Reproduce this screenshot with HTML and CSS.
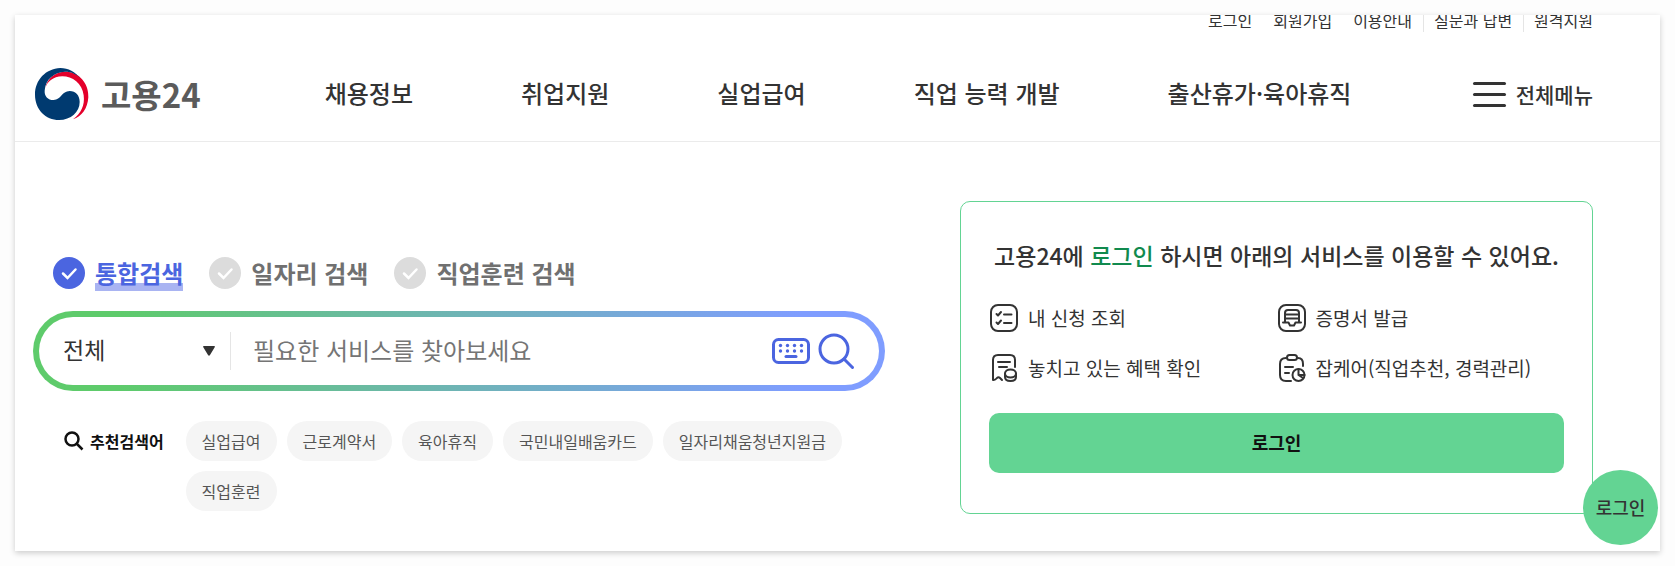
FILE: index.html
```html
<!DOCTYPE html>
<html lang="ko">
  <head>
    <meta charset="UTF-8" />
    <meta name="viewport" content="width=device-width, initial-scale=1.0" />
    <title>고용24</title>
    <link rel="stylesheet" href="styles.css">
  </head>
  <body>
    <div class="page">
      <header class="header">
        <ul class="util">
          <li><a href="#">로그인</a></li>
          <li><a href="#">회원가입</a></li>
          <li><a href="#">이용안내</a></li>
          <li class="line"><a href="#">질문과 답변</a></li>
          <li class="line"><a href="#">원격지원</a></li>
        </ul>
        <div class="gnb">
          <a href="#" class="logo">
            <svg width="54" height="52" viewBox="0 0 162 156">
              <path fill="#e4002b" d="M30 62C38 24 70 7 102 12C140 18 162 54 160 88C158 122 140 146 114 154C138 136 150 112 146 82C142 46 112 25 82 25C54 25 36 42 30 62Z" />
              <path fill="#003a70" d="M138 32C120 12 100 0 76 0C32 2 0 36 0 80C0 124 32 156 72 156C108 156 134 132 134 102C134 82 122 69 104 69C80 69 78 96 56 96C38 96 28 84 29 68C31 34 58 12 90 11C110 11 126 19 138 32Z" />
            </svg>
            <span>고용24</span>
          </a>
          <nav class="menu">
            <a href="#">채용정보</a>
            <a href="#">취업지원</a>
            <a href="#">실업급여</a>
            <a href="#">직업 능력 개발</a>
            <a href="#">출산휴가·육아휴직</a>
          </nav>
          <button type="button" class="all-menu">
            <span class="bars"><i></i><i></i><i></i></span>
            전체메뉴
          </button>
        </div>
      </header>

      <main class="main">
        <section class="search">
          <div class="tabs">
            <label class="tab">
              <input type="radio" name="type" checked />
              <svg class="check" viewBox="0 0 32 32"><circle cx="16" cy="16" r="16" /><path d="M10 16.500l4.500 4.500 8-8.500" /></svg>
              <span>통합검색</span>
            </label>
            <label class="tab">
              <input type="radio" name="type" />
              <svg class="check" viewBox="0 0 32 32"><circle cx="16" cy="16" r="16" /><path d="M10 16.500l4.500 4.500 8-8.500" /></svg>
              <span>일자리 검색</span>
            </label>
            <label class="tab">
              <input type="radio" name="type" />
              <svg class="check" viewBox="0 0 32 32"><circle cx="16" cy="16" r="16" /><path d="M10 16.500l4.500 4.500 8-8.500" /></svg>
              <span>직업훈련 검색</span>
            </label>
          </div>

          <form class="search-box">
            <div class="select-wrap">
              <select aria-label="검색 범위">
                <option>전체</option>
              </select>
              <svg width="12" height="10" viewBox="0 0 12 10"><path fill="#333" d="M1 0h10q1.500 0 .7 1.300L7 9q-1 1.300-2 0L.3 1.300Q-.5 0 1 0z" /></svg>
            </div>
            <input type="text" placeholder="필요한 서비스를 찾아보세요" aria-label="검색어" />
            <button type="button" class="icon-btn" aria-label="키보드">
              <svg width="38" height="26" viewBox="0 0 38 26" fill="#4b65e0">
                <rect x="1.500" y="1.500" width="35" height="23" rx="5" fill="none" stroke="#4b65e0" stroke-width="3" />
                <circle cx="8.500" cy="7.500" r="1.700" /><circle cx="15.500" cy="7.500" r="1.700" /><circle cx="22.500" cy="7.500" r="1.700" /><circle cx="29.500" cy="7.500" r="1.700" />
                <circle cx="8.500" cy="13" r="1.700" /><circle cx="15.500" cy="13" r="1.700" /><circle cx="22.500" cy="13" r="1.700" /><circle cx="29.500" cy="13" r="1.700" />
                <rect x="12.500" y="17" width="13" height="3" rx="1.500" />
              </svg>
            </button>
            <button type="submit" class="icon-btn" aria-label="검색">
              <svg width="37" height="37" viewBox="0 0 37 37" fill="none" stroke="#4b65e0" stroke-width="3" stroke-linecap="round">
                <circle cx="16" cy="16" r="14" /><path d="M26 26l8.500 8.500" />
              </svg>
            </button>
          </form>

          <div class="keywords">
            <strong>
              <svg width="20" height="20" viewBox="0 0 20 20" fill="none" stroke="#111" stroke-width="2.500"><circle cx="8" cy="8" r="6.500" /><path d="M12.500 12.500l6 6" /></svg>
              추천검색어
            </strong>
            <ul>
              <li><a href="#">실업급여</a></li>
              <li><a href="#">근로계약서</a></li>
              <li><a href="#">육아휴직</a></li>
              <li><a href="#">국민내일배움카드</a></li>
              <li><a href="#">일자리채움청년지원금</a></li>
              <li><a href="#">직업훈련</a></li>
            </ul>
          </div>
        </section>

        <section class="login-box">
          <h2>고용24에 <em>로그인</em> 하시면 아래의 서비스를 이용할 수 있어요.</h2>
          <ul class="services">
            <li>
              <a href="#">
                <svg viewBox="0 0 28 28"><rect x="1" y="1" width="26" height="26" rx="7" /><path d="M6.500 10l1.500 1.500 3-3.500M6.500 18.500l1.500 1.500 3-3.500M14 10.500h7.500M14 19h7.500" /></svg>
                내 신청 조회
              </a>
            </li>
            <li>
              <a href="#">
                <svg viewBox="0 0 28 28"><rect x="1" y="1" width="26" height="26" rx="7" /><path d="M7 18.500V9q0-3 3-3h8q3 0 3 3v9.500M7.500 10.500h13M7.500 14.500h13M5 18.500h5.500l1.500 3h4l1.500-3H23" /></svg>
                증명서 발급
              </a>
            </li>
            <li>
              <a href="#">
                <svg viewBox="0 0 28 28"><path d="M3 26V6q0-5 5-5h12q5 0 5 5v7M3 26q2 .5 4-2 1.500-1.500 3 0l2 2M8 8h12M9 13h8" /><ellipse cx="20.500" cy="19.500" rx="5.500" ry="4" /><path d="M15 19.500V23q0 4 5.500 4t5.500-4v-3.500" /></svg>
                놓치고 있는 혜택 확인
              </a>
            </li>
            <li>
              <a href="#">
                <svg viewBox="0 0 28 28"><rect x="9" y="1" width="10" height="5" rx="2.500" /><path d="M8 4Q2 4 2 10v11q0 6 6 6h5M20 4q5 0 5 6v2M7 13h8M7 19h4" /><circle cx="20.500" cy="21" r="6" /><path d="M20.500 15v6l4.500 3M20.500 21h6" /></svg>
                잡케어(직업추천, 경력관리)
              </a>
            </li>
          </ul>
          <button type="button" class="login-btn">로그인</button>
        </section>
      </main>

      <a href="#" class="quick-login">로그인</a>
    </div>
  </body>
</html>
```

FILE: styles.css
```css
* {
  box-sizing: border-box;
  margin: 0;
  padding: 0;
}

body {
  padding: 15px;
  background-color: #fdfdfd;
  font-family: "Noto Sans CJK KR", sans-serif;
  color: #333;
}

ul {
  list-style: none;
}

a {
  color: inherit;
  text-decoration: none;
}

button,
input,
select {
  font-family: inherit;
  color: inherit;
  border: 0;
  background: none;
}

.page {
  position: relative;
  background-color: #fff;
  box-shadow: 0 2px 6px rgba(0, 0, 0, 0.2);
}

.header {
  height: 127px;
  padding: 0 67px 0 20px;
  border-bottom: 1px solid #ebebeb;
  overflow: hidden;
}

/* top links are partly scrolled out of view */
.util {
  display: flex;
  justify-content: flex-end;
  gap: 21px;
  margin-top: -7px;
  font-size: 16px;
  line-height: 24px;
}

.util .line {
  padding-left: 10px;
  margin-left: -10px;
  border-left: 1px solid #e5e5e5;
}

.gnb {
  display: flex;
  align-items: center;
  height: 124px;
}

.logo {
  display: flex;
  align-items: center;
  gap: 12px;
  font-size: 33px;
  font-weight: 700;
  color: #5b5b5b;
}

.menu {
  display: flex;
  gap: 108px;
  margin-left: 124px;
  padding-bottom: 4px;
  font-size: 24px;
  font-weight: 500;
}

.all-menu {
  display: flex;
  align-items: center;
  gap: 10px;
  margin-left: auto;
  font-size: 21px;
  font-weight: 500;
}

.bars {
  display: flex;
  flex-direction: column;
  gap: 8px;
}

.bars i {
  width: 33px;
  height: 3px;
  border-radius: 2px;
  background-color: #333;
}

.main {
  display: flex;
  align-items: flex-start;
  padding: 59px 67px 37px 18px;
}

.search {
  width: 852px;
  padding-top: 54px;
}

.tabs {
  display: flex;
  gap: 26px;
  padding-left: 20px;
}

.tab {
  display: flex;
  align-items: center;
  gap: 10px;
  font-size: 24px;
  font-weight: 700;
  line-height: 36px;
  color: #707070;
}

.tab input {
  position: absolute;
  appearance: none;
}

.check {
  width: 32px;
  height: 32px;
  fill: #dcdcdc;
}

.check path {
  fill: none;
  stroke: #fff;
  stroke-width: 2.5;
  stroke-linecap: round;
}

.tab input:checked ~ .check {
  fill: #4b65e0;
}

.tab input:checked ~ span {
  color: #4b65e0;
  background: linear-gradient(#a9b4f2, #a9b4f2) bottom / 100% 8px no-repeat;
}

.search-box {
  display: flex;
  align-items: center;
  height: 80px;
  margin-top: 20px;
  padding: 0 24px;
  border: 6px solid transparent;
  border-radius: 40px;
  background:
    linear-gradient(#fff, #fff) padding-box,
    linear-gradient(90deg, #5ecb6b 10%, #7f9dff 90%) border-box;
}

.select-wrap {
  display: flex;
  align-items: center;
  width: 168px;
  height: 38px;
  padding-right: 15px;
  border-right: 1px solid #e5e5e5;
}

.select-wrap select {
  flex: 1;
  appearance: none;
  padding-bottom: 4px;
  font-size: 23px;
}

.search-box input {
  flex: 1;
  min-width: 0;
  padding: 0 0 4px 22px;
  font-size: 24px;
}

.search-box input::placeholder {
  color: #757575;
}

.icon-btn {
  display: flex;
  margin-left: 8px;
}

.keywords {
  display: flex;
  gap: 22px;
  margin-top: 30px;
  padding: 0 20px 0 31px;
}

.keywords strong {
  display: flex;
  flex-shrink: 0;
  align-items: center;
  gap: 6px;
  height: 40px;
  font-size: 16px;
  color: #111;
}

.keywords ul {
  display: flex;
  flex-wrap: wrap;
  gap: 10px;
}

.keywords a {
  display: block;
  padding: 0 16px;
  border-radius: 20px;
  background-color: #f5f5f5;
  font-size: 16px;
  line-height: 40px;
  color: #555;
}

.login-box {
  flex: 1;
  margin-left: 75px;
  padding: 32px 28px 40px;
  border: 1px solid #63d493;
  border-radius: 10px;
}

.login-box h2 {
  font-size: 23px;
  font-weight: 500;
  line-height: 42px;
  text-align: center;
  white-space: nowrap;
}

.login-box em {
  font-style: normal;
  color: #118a4e;
}

.services {
  display: grid;
  grid-template-columns: 1fr 1fr;
  row-gap: 20px;
  margin-top: 27px;
}

.services a {
  display: flex;
  align-items: center;
  gap: 10px;
  padding-left: 1px;
  font-size: 19px;
  line-height: 30px;
}

.services svg {
  width: 28px;
  height: 28px;
  fill: none;
  stroke: #333;
  stroke-width: 2;
  stroke-linecap: round;
  stroke-linejoin: round;
}

.login-btn {
  width: 100%;
  height: 60px;
  margin-top: 30px;
  padding-bottom: 2px;
  border-radius: 10px;
  background-color: #63d493;
  font-size: 18px;
  font-weight: 700;
  color: #111;
}

.quick-login {
  position: absolute;
  right: 2px;
  bottom: 6px;
  width: 75px;
  height: 75px;
  border-radius: 50%;
  background-color: #63d493;
  font-size: 18px;
  font-weight: 500;
  line-height: 75px;
  text-align: center;
}
```
